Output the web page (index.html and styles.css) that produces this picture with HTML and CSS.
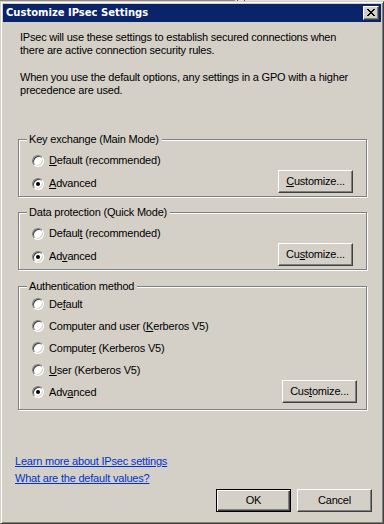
FILE: index.html
```html
<!DOCTYPE html>
<html lang="en">
<head>
<meta charset="utf-8">
<title>Customize IPsec Settings</title>
<link rel="stylesheet" href="styles.css">
</head>
<body>
<div class="backdrop"></div>
<div class="window">
  <div class="titlebar">
    <span class="title">Customize IPsec Settings</span>
    <span class="close-btn" aria-label="Close">
      <svg width="8" height="7" viewBox="0 0 8 7" shape-rendering="crispEdges"><path fill="#000" d="M0 0h2v1h-2zM6 0h2v1h-2zM1 1h2v1h-2zM5 1h2v1h-2zM2 2h4v1h-4zM3 3h2v1h-2zM2 4h4v1h-4zM1 5h2v1h-2zM5 5h2v1h-2zM0 6h2v1h-2zM6 6h2v1h-2z"/></svg>
    </span>
  </div>
  <div class="client">
    <p class="intro">IPsec will use these settings to establish secured connections when<br>there are active connection security rules.</p>
    <p class="intro intro-last">When you use the default options, any settings in a GPO with a higher<br>precedence are used.</p>

    <div class="group group-first">
      <div class="group-title">Key exchange (Main Mode)</div>
      <div class="options">
        <div class="option"><span class="radio"></span><span class="label"><u>D</u>efault (recommended)</span></div>
        <div class="option"><span class="radio checked"></span><span class="label"><u>A</u>dvanced</span><button class="btn btn-customize"><u>C</u>ustomize...</button></div>
      </div>
    </div>

    <div class="group">
      <div class="group-title">Data protection (Quick Mode)</div>
      <div class="options">
        <div class="option"><span class="radio"></span><span class="label">Defaul<u>t</u> (recommended)</span></div>
        <div class="option"><span class="radio checked"></span><span class="label">Ad<u>v</u>anced</span><button class="btn btn-customize">Cu<u>s</u>tomize...</button></div>
      </div>
    </div>

    <div class="group group-auth">
      <div class="group-title">Authentication method</div>
      <div class="options options-compact">
        <div class="option"><span class="radio"></span><span class="label">De<u>f</u>ault</span></div>
        <div class="option"><span class="radio"></span><span class="label">Computer and user (<u>K</u>erberos V5)</span></div>
        <div class="option"><span class="radio"></span><span class="label">Compute<u>r</u> (Kerberos V5)</span></div>
        <div class="option"><span class="radio"></span><span class="label"><u>U</u>ser (Kerberos V5)</span></div>
        <div class="option"><span class="radio checked"></span><span class="label">Adv<u>a</u>nced</span><button class="btn btn-customize">Cus<u>t</u>omize...</button></div>
      </div>
    </div>

    <div class="links">
      <a href="#" class="link">Learn more about IPsec settings</a>
      <a href="#" class="link">What are the default values?</a>
    </div>

    <div class="actions">
      <button class="btn btn-default">OK</button>
      <button class="btn">Cancel</button>
    </div>
  </div>
</div>
</body>
</html>
```
FILE: styles.css
```css
html, body {
  margin: 0;
  padding: 0;
}
body {
  width: 384px;
  height: 524px;
  overflow: hidden;
  background: #d4d0c8;
  font-family: "Liberation Sans", Arial, sans-serif;
  font-size: 11px;
  letter-spacing: -0.2px;
  color: #000;
}
.backdrop {
  height: 1px;
  background: linear-gradient(to right, #8c8c8c 0, #8c8c8c 235px, #e4e2de 235px, #e4e2de 237px, #505050 237px, #505050 238px, #e4e2de 238px, #e4e2de 244px, #505050 244px, #505050 245px, #e4e2de 245px);
}
.window {
  box-sizing: border-box;
  height: 523px;
  width: 384px;
  border: 1px solid;
  border-color: #d4d0c8 #404040 #404040 #d4d0c8;
  box-shadow: inset 1px 1px 0 #fff, inset -1px -1px 0 #808080;
  padding: 2px;
  display: flex;
  flex-direction: column;
}
.titlebar {
  height: 18px;
  flex: none;
  background: #0a246a;
  display: flex;
  align-items: center;
  padding: 0 2px 0 3px;
}
.title {
  flex: 1;
  color: #fff;
  font-family: "DejaVu Sans", Verdana, sans-serif;
  font-weight: bold;
  font-size: 10px;
  letter-spacing: 0;
  line-height: 18px;
  white-space: nowrap;
}
.close-btn {
  box-sizing: border-box;
  width: 16px;
  height: 14px;
  background: #d4d0c8;
  border: 1px solid;
  border-color: #fff #404040 #404040 #fff;
  box-shadow: inset -1px -1px 0 #808080;
  display: flex;
  align-items: center;
  justify-content: center;
  padding: 0 1px 1px 0;
}
.close-btn svg {
  display: block;
}
.client {
  flex: 1;
  padding: 9px 0 0 0;
}
.intro {
  margin: 0 0 14px 17px;
  line-height: 13px;
}
.intro-last {
  margin-bottom: 0;
}
.group {
  box-sizing: border-box;
  width: 349px;
  margin: 15px 0 0 15px;
  border: 1px solid #808080;
  box-shadow: inset 1px 1px 0 #fff, 1px 1px 0 #fff;
}
.group-first {
  margin-top: 42px;
}
.group-auth {
  margin-top: 16px;
}
.group-title {
  width: fit-content;
  margin: -7px 0 0 8px;
  padding: 0 3px 0 2px;
  background: #d4d0c8;
  line-height: 13px;
  white-space: nowrap;
}
.options {
  padding: 3px 13px 1px 13px;
}
.options-compact {
  padding: 0 9px 6px 13px;
}
.option {
  display: flex;
  align-items: center;
  height: 23px;
}
.options-compact .option {
  height: 22px;
}
.radio {
  position: relative;
  box-sizing: border-box;
  flex: none;
  width: 12px;
  height: 12px;
  border-radius: 50%;
  border: 1px solid;
  border-color: #808080 #fff #fff #808080;
  background: #fff;
  box-shadow: inset 1px 1px 0 #404040, inset -1px -1px 0 #d4d0c8;
  margin-right: 5px;
}
.radio.checked::after {
  content: "";
  position: absolute;
  left: 3px;
  top: 3px;
  width: 4px;
  height: 4px;
  border-radius: 50%;
  background: #000;
}
.label {
  line-height: 13px;
  white-space: nowrap;
}
u {
  text-decoration: underline;
  text-underline-offset: 1px;
}
.btn {
  box-sizing: border-box;
  width: 75px;
  height: 23px;
  padding: 0;
  margin: 0;
  background: #d4d0c8;
  border: 1px solid;
  border-color: #fff #404040 #404040 #fff;
  box-shadow: inset -1px -1px 0 #808080;
  font-family: inherit;
  font-size: 11px;
  letter-spacing: -0.2px;
  color: #000;
  line-height: 13px;
  text-align: center;
}
.btn-customize {
  margin-left: auto;
  align-self: flex-start;
  margin-top: -2px;
}
.options-compact .btn-customize {
  margin-top: -1px;
}
.btn-default {
  border: 1px solid #000;
  box-shadow: inset 1px 1px 0 #fff, inset -1px -1px 0 #404040, inset -2px -2px 0 #808080;
}
.links {
  margin: 43px 0 0 12px;
  display: flex;
  flex-direction: column;
  align-items: flex-start;
}
.link {
  line-height: 17px;
  color: #0033cc;
  text-decoration: underline;
  text-underline-offset: 1px;
}
.actions {
  display: flex;
  justify-content: flex-end;
  gap: 6px;
  margin-top: 2px;
  padding-right: 9px;
}
```
